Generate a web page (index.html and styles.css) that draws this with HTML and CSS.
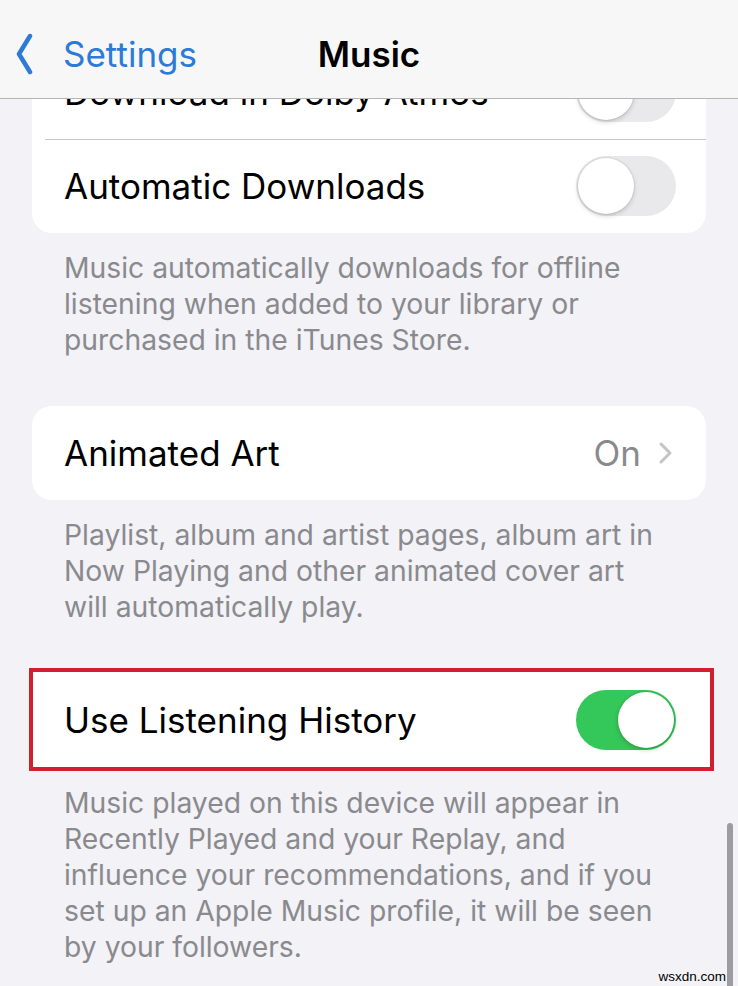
FILE: index.html
```html
<!DOCTYPE html>
<html>
<head>
<title>Music</title>
<meta name="viewport" content="width=device-width, initial-scale=1">
<link rel="stylesheet" href="styles.css">
</head>
<body>

<div class="navbar">
  <a class="back" href="#">
    <svg class="back-icon" width="18" height="42" viewBox="0 0 18 42">
      <path d="M15 3 L4 21 L15 39" fill="none" stroke="#2d7bd6" stroke-width="4.5" stroke-linecap="round" stroke-linejoin="round"/>
    </svg>
    <span>Settings</span>
  </a>
  <div class="title">Music</div>
</div>

<div class="page">

  <div class="group">
    <div class="row">
      <span class="label">Download in Dolby Atmos</span>
      <span class="switch"></span>
    </div>
    <div class="row">
      <span class="label">Automatic Downloads</span>
      <span class="switch"></span>
    </div>
  </div>
  <p class="note">Music automatically downloads for offline<br>listening when added to your library or<br>purchased in the iTunes Store.</p>

  <div class="group">
    <div class="row">
      <span class="label">Animated Art</span>
      <span class="value">On
        <svg class="chev" width="16" height="26" viewBox="0 0 16 26">
          <path d="M3 4 L12 13 L3 22" fill="none" stroke="#c4c4c7" stroke-width="3" stroke-linecap="round" stroke-linejoin="round"/>
        </svg>
      </span>
    </div>
  </div>
  <p class="note">Playlist, album and artist pages, album art in<br>Now Playing and other animated cover art<br>will automatically play.</p>

  <div class="group marked">
    <div class="row">
      <span class="label">Use Listening History</span>
      <span class="switch on"></span>
    </div>
  </div>
  <p class="note">Music played on this device will appear in<br>Recently Played and your Replay, and<br>influence your recommendations, and if you<br>set up an Apple Music profile, it will be seen<br>by your followers.</p>

</div>

<div class="scrollbar"></div>
<div class="watermark">wsxdn.com</div>

</body>
</html>
```

FILE: styles.css
```css
body {
  margin: 0;
  width: 738px;
  height: 986px;
  overflow: hidden;
  position: relative;
  background-color: #f2f2f7;
  font-family: Inter, "Liberation Sans", Arial, sans-serif;
  color: #000;
}

/* top bar sits over the scrolled list */
.navbar {
  position: absolute;
  top: 0;
  left: 0;
  right: 0;
  height: 98px;
  background-color: #f7f7f7;
  border-bottom: 1px solid #b5b5b5;
  z-index: 2;
}

.back {
  position: absolute;
  left: 15px;
  top: 33px;
  display: flex;
  align-items: center;
  gap: 30px;
  color: #2d7bd6;
  text-decoration: none;
  font-size: 35px;
}

.back-icon {
  display: block;
}

.title {
  text-align: center;
  font-size: 35px;
  font-weight: 600;
  line-height: 40px;
  padding-top: 34px;
}

.page {
  padding: 45px 32px 0 32px;
}

.group {
  background-color: #fff;
  border-radius: 20px;
  overflow: hidden;
}

.row {
  height: 94px;
  display: flex;
  align-items: center;
  justify-content: space-between;
  padding: 0 30px 0 32px;
  position: relative;
  font-size: 35px;
}

.row + .row::before {
  content: "";
  position: absolute;
  top: 0;
  left: 13px;
  right: 0;
  border-top: 1px solid #c8c8cc;
}

.value {
  display: flex;
  align-items: center;
  gap: 17px;
  color: #8a8a8e;
  margin-right: 2px;
}

.chev {
  display: block;
}

.switch {
  width: 100px;
  height: 60px;
  border-radius: 30px;
  background-color: #e9e9eb;
  position: relative;
  flex-shrink: 0;
}

.switch::after {
  content: "";
  position: absolute;
  top: 2px;
  left: 2px;
  width: 56px;
  height: 56px;
  border-radius: 50%;
  background-color: #fff;
  box-shadow: 0 2px 5px rgba(0, 0, 0, 0.18), 0 0 0 1px rgba(0, 0, 0, 0.05);
}

.switch.on {
  background-color: #34c759;
}

.switch.on::after {
  left: 42px;
}

.note {
  margin: 17px 0 48px 0;
  padding-left: 32px;
  font-size: 28.3px;
  line-height: 36px;
  color: #8a8a8e;
}

/* red annotation box around the last group */
.marked {
  border: 4px solid #d0202e;
  border-radius: 0;
  margin: -5px -8px 0 -3px;
}

.marked .row {
  height: 95px;
  padding-left: 31px;
  padding-right: 34px;
}

.marked + .note {
  margin-top: 14px;
}

.scrollbar {
  position: absolute;
  left: 727px;
  top: 823px;
  width: 6px;
  height: 170px;
  border-radius: 3px;
  background-color: #9d9da1;
}

.watermark {
  position: absolute;
  right: 12px;
  bottom: 2px;
  font-family: "Liberation Sans", Arial, sans-serif;
  font-size: 13.5px;
  color: #000;
}
```
